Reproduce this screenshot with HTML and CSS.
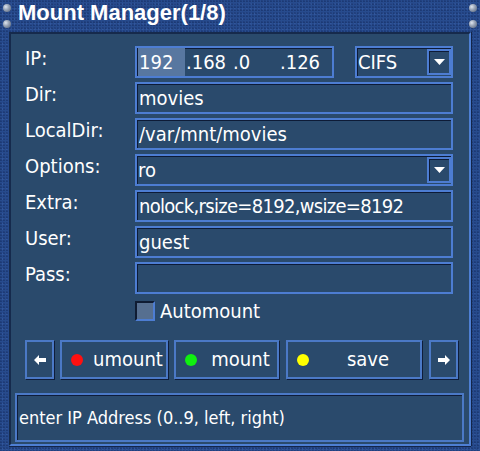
FILE: index.html
```html
<!DOCTYPE html>
<html>
<head>
<meta charset="utf-8">
<link rel="stylesheet" href="styles.css">
</head>
<body>
<div class="window">
  <div class="titlebar">
    <div class="screws"><span class="screw"></span><span class="screw"></span></div>
    <div class="title">Mount Manager(1/8)</div>
    <div class="screws right"><span class="screw"></span><span class="screw"></span></div>
  </div>
  <div class="panel">
    <div class="form">
      <div class="label">IP:</div>
      <div class="iprow">
        <div class="field ip">
          <span class="seg sel">192</span><span class="seg">.168</span><span class="seg">.0</span><span class="seg">.126</span>
        </div>
        <div class="field combo small">
          <span class="value">CIFS</span>
          <span class="drop"><svg width="11" height="6" viewBox="0 0 11 6"><polygon points="0,0 11,0 5.5,6" fill="#fff"/></svg></span>
        </div>
      </div>

      <div class="label">Dir:</div>
      <div class="field"><span class="value">movies</span></div>

      <div class="label">LocalDir:</div>
      <div class="field"><span class="value">/var/mnt/movies</span></div>

      <div class="label">Options:</div>
      <div class="field combo">
        <span class="value">ro</span>
        <span class="drop"><svg width="11" height="6" viewBox="0 0 11 6"><polygon points="0,0 11,0 5.5,6" fill="#fff"/></svg></span>
      </div>

      <div class="label">Extra:</div>
      <div class="field"><span class="value tight">nolock,rsize=8192,wsize=8192</span></div>

      <div class="label">User:</div>
      <div class="field"><span class="value">guest</span></div>

      <div class="label">Pass:</div>
      <div class="field"><span class="value"></span></div>

      <div class="label"></div>
      <div class="checkrow"><span class="checkbox"></span><span class="checklabel">Automount</span></div>
    </div>

    <div class="buttons">
      <div class="btn arrow">
        <svg width="12" height="10" viewBox="0 0 12 10"><polygon points="0,5 5,0 5,3 12,3 12,7 5,7 5,10" fill="#fff"/></svg>
      </div>
      <div class="btn act w-umount"><span class="dot red"></span><span class="btext">umount</span></div>
      <div class="btn act w-mount"><span class="dot green"></span><span class="btext">mount</span></div>
      <div class="btn act w-save"><span class="dot yellow"></span><span class="btext">save</span></div>
      <div class="btn arrow">
        <svg width="12" height="10" viewBox="0 0 12 10"><polygon points="12,5 7,0 7,3 0,3 0,7 7,7 7,10" fill="#fff"/></svg>
      </div>
    </div>

    <div class="status">enter IP Address (0..9, left, right)</div>
  </div>
</div>
</body>
</html>
```
FILE: styles.css
```css
* { box-sizing: border-box; }
html, body {
  margin: 0;
  padding: 0;
}
body {
  width: 480px;
  height: 451px;
  overflow: hidden;
  background: #264a8c;
  font-family: "DejaVu Sans Condensed", "DejaVu Sans", sans-serif;
  font-stretch: condensed;
  color: #fff;
}
.window {
  width: 480px;
  height: 451px;
  background-color: #274b8d;
  background-image:
    radial-gradient(circle at 30% 40%, rgba(10,25,70,0.35) 0.6px, transparent 1.2px),
    radial-gradient(circle at 70% 80%, rgba(80,120,200,0.25) 0.6px, transparent 1.2px);
  background-size: 3px 3px, 4px 5px;
  display: flex;
  flex-direction: column;
}
.titlebar {
  height: 32px;
  display: flex;
  align-items: flex-start;
}
.screws {
  width: 14px;
  padding: 4px 0 0 3px;
  display: flex;
  flex-direction: column;
  gap: 8px;
}
.screws.right {
  margin-left: auto;
  width: 14px;
  padding: 4px 3px 0 3px;
}
.screw {
  width: 8px;
  height: 8px;
  border-radius: 50%;
  background: radial-gradient(circle at 35% 35%, #dfe6f0 0, #9aa6b8 40%, #4d5c74 100%);
}
.title {
  margin-left: 4px;
  font-family: "Liberation Sans", Arial, sans-serif;
  font-stretch: normal;
  font-weight: bold;
  font-size: 22px;
  line-height: 26px;
  color: #fff;
}
.panel {
  margin: 0 9px 5px 9px;
  flex: 1;
  background: #2a4a6c;
  border-top: 2px solid #162a4c;
  border-left: 2px solid #162a4c;
  border-right: 2px solid #4e7fd3;
  border-bottom: 2px solid #4e7fd3;
  box-shadow: 0 1px 0 #14264a, 1px 0 0 #14264a;
  padding: 12px 0 0 0;
  display: flex;
  flex-direction: column;
}
.form {
  display: grid;
  grid-template-columns: 110px 318px;
  grid-auto-rows: 32px;
  row-gap: 4px;
  padding-left: 14px;
}
.label {
  font-size: 20px;
  line-height: 25px;
  color: #fff;
  white-space: nowrap;
}
.field {
  height: 32px;
  border: 2px solid #4d7dd2;
  box-shadow: inset 1px 1px 0 #0d1b36;
  background: #2a4a6c;
  display: flex;
  align-items: center;
  font-size: 20px;
  color: #fff;
  white-space: nowrap;
}
.value {
  padding-left: 2px;
  line-height: 28px;
}
.value.tight {
  letter-spacing: -0.7px;
}
.iprow {
  display: flex;
  justify-content: space-between;
}
.field.ip {
  width: 199px;
  align-items: stretch;
  padding-left: 1px;
}
.seg {
  width: 47px;
  line-height: 28px;
  padding-left: 1px;
}
.seg.sel {
  background: #5877a0;
}
.field.small {
  width: 98px;
}
.combo {
  justify-content: space-between;
}
.combo .value {
  padding-left: 1px;
}
.drop {
  width: 24px;
  height: 26px;
  border: 2px solid #4d7dd2;
  box-shadow: inset 1px 1px 0 #0d1b36;
  display: flex;
  align-items: center;
  justify-content: center;
}
.checkrow {
  margin-top: 3px;
  height: 20px;
  display: flex;
  align-items: center;
  gap: 5px;
}
.checkbox {
  width: 20px;
  height: 20px;
  flex: none;
  background: #566f90;
  border-top: 2px solid #0f1c33;
  border-left: 2px solid #0f1c33;
  border-right: 2px solid #4d7dd2;
  border-bottom: 2px solid #4d7dd2;
}
.checklabel {
  font-size: 20px;
  line-height: 22px;
}
.buttons {
  margin-top: 10px;
  padding-left: 14px;
  display: flex;
  height: 39px;
}
.btn {
  height: 39px;
  border: 2px solid #4b79c6;
  box-shadow: 1px 1px 0 #0f1d3a;
  display: flex;
  align-items: center;
  font-size: 20px;
  color: #fff;
}
.btn.arrow {
  width: 29px;
  justify-content: center;
}
.btn.w-umount { width: 108px; margin-left: 6px; }
.btn.w-mount { width: 105px; margin-left: 6px; }
.btn.w-save { width: 136px; margin-left: 7px; margin-right: 7px; }
.act {
  padding-left: 9px;
}
.dot {
  width: 12px;
  height: 12px;
  border-radius: 50%;
  flex: none;
}
.dot.red { background: #ff1010; }
.dot.green { background: #10f010; }
.dot.yellow { background: #ffff00; }
.btext {
  flex: 1;
  text-align: center;
  margin-left: 7px;
  line-height: 28px;
  padding-bottom: 2px;
}
.status {
  margin: 14px 0 0 4px;
  width: 449px;
  height: 49px;
  border: 2px solid #4b79c6;
  box-shadow: inset 1px 1px 0 #0f1d3a;
  font-size: 18px;
  padding-left: 2px;
  display: flex;
  align-items: center;
}
```
